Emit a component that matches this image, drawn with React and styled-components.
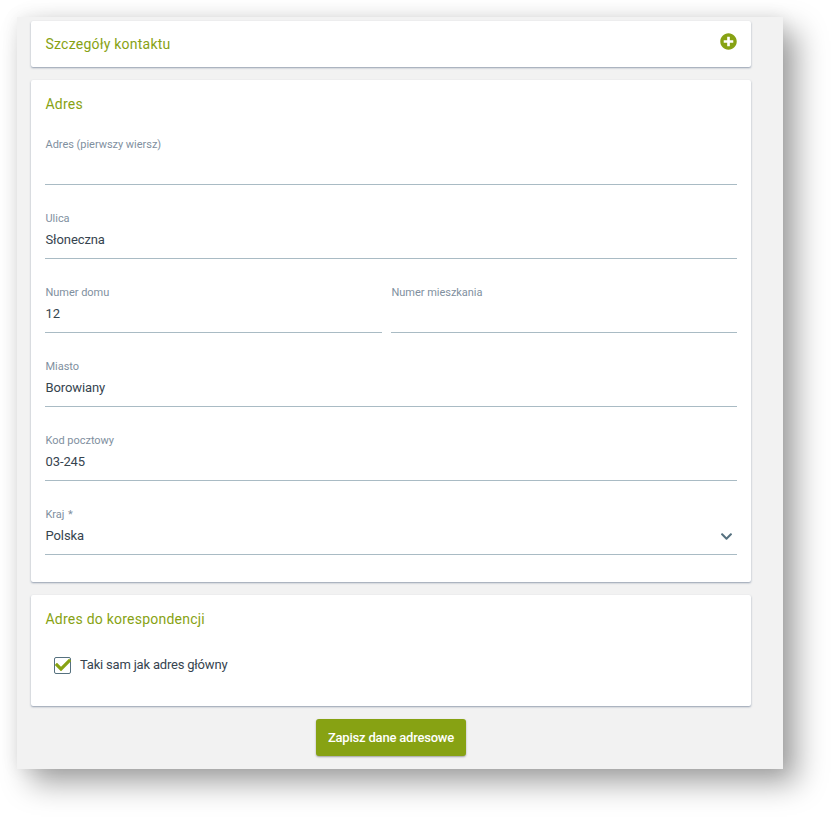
import React from 'react'
import styled, { createGlobalStyle } from 'styled-components'
import { FaPlusCircle, FaCheck, FaChevronDown } from 'react-icons/fa'

const GlobalStyle = createGlobalStyle`
  html, body {
    margin: 0;
    background: #fff;
  }
  body {
    font-family: Roboto, "Liberation Sans", sans-serif;
  }
`

const Page = styled.div`
  box-sizing: border-box;
  width: 831px;
  height: 817px;
  padding: 17px 0 0 17px;
  overflow: hidden;
`

const Panel = styled.main`
  display: flex;
  flex-direction: column;
  gap: 13px;
  box-sizing: border-box;
  width: 766px;
  height: 752px;
  padding: 4px 32px 0 14px;
  background: #f2f2f2;
  box-shadow: 14px 14px 28px rgba(0, 0, 0, 0.36), 0 0 16px rgba(0, 0, 0, 0.08);
`

const Card = styled.section`
  box-sizing: border-box;
  padding: ${p => p.$top || 12}px 14px ${p => p.$bottom}px;
  background: #fff;
  border-radius: 2px;
  box-shadow: 0 1px 2px rgba(70, 90, 120, 0.55);
`

const CardHeader = styled.div`
  display: flex;
  justify-content: space-between;
  align-items: flex-start;
`

const Title = styled.h2`
  margin: 0;
  padding-left: 0.5px;
  font-size: 14px;
  font-weight: 400;
  line-height: 24px;
  letter-spacing: 0.23px;
  color: #87a213;
`

const PlusIcon = styled(FaPlusCircle)`
  width: 17px;
  height: 17px;
  margin-top: 1px;
  color: #87a213;
`

const Fields = styled.div`
  display: flex;
  flex-direction: column;
  gap: 25px;
  margin-top: 20px;
`

const FieldRow = styled.div`
  display: grid;
  grid-template-columns: 337px 1fr;
  gap: 9px;
`

const Field = styled.div`
  position: relative;
  padding-bottom: 6px;
  border-bottom: 1px solid #a9bbc4;
`

const Label = styled.div`
  padding-left: 0.5px;
  font-size: 11px;
  line-height: 18px;
  letter-spacing: -0.03px;
  color: #7f90a0;
`

const Required = styled.span`
  margin-left: 1px;
`

const Value = styled.div`
  height: 24px;
  padding-left: 0.5px;
  font-size: 13px;
  line-height: 24px;
  letter-spacing: -0.1px;
  color: #36444f;
`

const Chevron = styled(FaChevronDown)`
  position: absolute;
  right: 4px;
  top: 24px;
  width: 13px;
  height: 13px;
  color: #56717f;
`

const CheckRow = styled.label`
  display: flex;
  align-items: center;
  gap: 9px;
  margin: 25px 0 0 9px;
  font-size: 13px;
  line-height: 18px;
  letter-spacing: -0.2px;
  color: #36444f;
`

const Box = styled.span`
  position: relative;
  box-sizing: border-box;
  width: 17px;
  height: 17px;
  border: 1px solid #56717f;
  border-radius: 2px;
`

const CheckIcon = styled(FaCheck)`
  position: absolute;
  left: 0;
  top: -1px;
  width: 16px;
  height: 16px;
  color: #87a213;
`

const Actions = styled.div`
  display: flex;
  justify-content: center;
`

const SaveButton = styled.button`
  width: 150px;
  height: 37px;
  padding: 0;
  border: 0;
  border-radius: 3px;
  background: #87a213;
  box-shadow: 0 1px 2px rgba(0, 0, 0, 0.35);
  font-family: inherit;
  font-size: 13px;
  font-weight: 500;
  letter-spacing: -0.2px;
  color: #fff;
`

export default function App() {
  return (
    <Page>
      <GlobalStyle />
      <Panel>
        <Card $top={11} $bottom={11}>
          <CardHeader>
            <Title>Szczegóły kontaktu</Title>
            <PlusIcon />
          </CardHeader>
        </Card>

        <Card $bottom={27}>
          <Title>Adres</Title>
          <Fields>
            <Field>
              <Label>Adres (pierwszy wiersz)</Label>
              <Value />
            </Field>
            <Field>
              <Label>Ulica</Label>
              <Value>Słoneczna</Value>
            </Field>
            <FieldRow>
              <Field>
                <Label>Numer domu</Label>
                <Value>12</Value>
              </Field>
              <Field>
                <Label>Numer mieszkania</Label>
                <Value />
              </Field>
            </FieldRow>
            <Field>
              <Label>Miasto</Label>
              <Value>Borowiany</Value>
            </Field>
            <Field>
              <Label>Kod pocztowy</Label>
              <Value>03-245</Value>
            </Field>
            <Field>
              <Label>
                Kraj <Required>*</Required>
              </Label>
              <Value>Polska</Value>
              <Chevron />
            </Field>
          </Fields>
        </Card>

        <Card $bottom={32}>
          <Title>Adres do korespondencji</Title>
          <CheckRow>
            <Box>
              <CheckIcon />
            </Box>
            Taki sam jak adres główny
          </CheckRow>
        </Card>

        <Actions>
          <SaveButton>Zapisz dane adresowe</SaveButton>
        </Actions>
      </Panel>
    </Page>
  )
}
